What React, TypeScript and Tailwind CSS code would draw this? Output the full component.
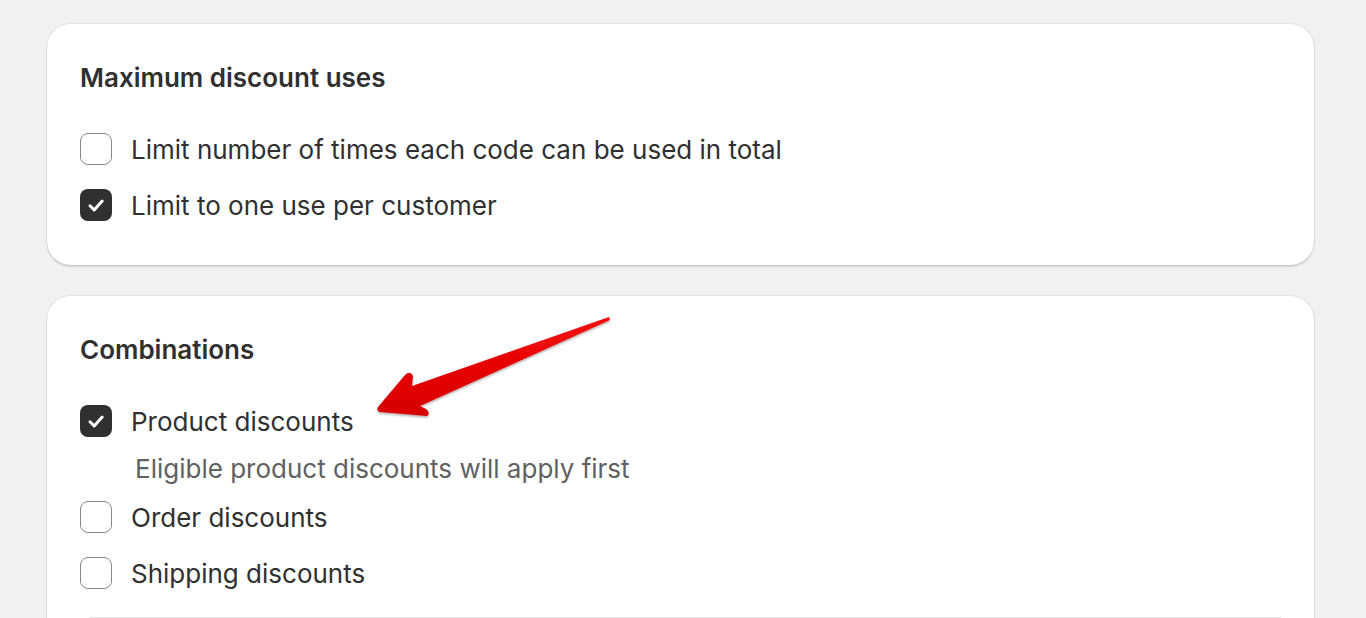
import React from 'react';

function CheckIcon() {
  return (
    <svg viewBox="0 0 32 32" className="h-[32px] w-[32px]" fill="none">
      <path d="M10 16.8l4.2 4.2L22.2 12" stroke="white" strokeWidth="3" strokeLinecap="round" strokeLinejoin="round" />
    </svg>
  );
}

function Checkbox({ checked }: { checked?: boolean }) {
  return checked ? (
    <div className="flex h-[32px] w-[32px] shrink-0 items-center justify-center rounded-[8px] bg-[#303030]">
      <CheckIcon />
    </div>
  ) : (
    <div className="h-[32px] w-[32px] shrink-0 rounded-[8px] border border-[#8a8a8a] bg-white" />
  );
}

function Option({ label, checked, help }: { label: string; checked?: boolean; help?: string }) {
  return (
    <div>
      <label className="flex h-[56px] items-center gap-[19px]">
        <Checkbox checked={checked} />
        <span className="text-[26px] text-[#303030]">{label}</span>
      </label>
      {help && <p className="pl-[55px] text-[26px] leading-[40px] text-[#616161]">{help}</p>}
    </div>
  );
}

function Card({ title, children }: { title: string; children: React.ReactNode }) {
  return (
    <div className="rounded-[24px] bg-white px-[33px] pb-[32px] pt-[38px] shadow-[0_2px_2px_rgba(0,0,0,0.12),0_0_0_1px_rgba(0,0,0,0.06)]">
      <h2 className="mb-[27px] text-[26px] font-semibold leading-[32px] text-[#303030]">{title}</h2>
      {children}
    </div>
  );
}

export default function App() {
  return (
    <div className="relative h-[618px] overflow-hidden bg-[#f1f1f1] px-[47px] pt-[24px] font-['Inter',sans-serif]">
      <div className="flex w-[1267px] flex-col gap-[31px]">
        <Card title="Maximum discount uses">
          <Option label="Limit number of times each code can be used in total" />
          <Option label="Limit to one use per customer" checked />
        </Card>
        <Card title="Combinations">
          <Option label="Product discounts" checked help="Eligible product discounts will apply first" />
          <Option label="Order discounts" />
          <Option label="Shipping discounts" />
          <div className="ml-[10px] mt-[16px] border-t border-[#e3e3e3]" />
          <div className="h-[60px]" />
        </Card>
      </div>

      {/* annotation arrow */}
      <svg className="pointer-events-none absolute left-0 top-0" width="1366" height="618">
        <defs>
          <linearGradient id="arrowFill" x1="0" y1="0" x2="0" y2="1">
            <stop offset="0" stopColor="#f30a0a" />
            <stop offset="1" stopColor="#d80000" />
          </linearGradient>
          <filter id="arrowShadow" x="-10%" y="-10%" width="120%" height="130%">
            <feDropShadow dx="0" dy="1.5" stdDeviation="1" floodColor="#000" floodOpacity="0.35" />
          </filter>
        </defs>
        <path
          d="M609 317 L610 320 L420 406 L426 409 Q431 413 427 416 L380 412 Q376 411 378 407 L405 375 Q410 370 413 376 L412 386 Z"
          fill="url(#arrowFill)"
          filter="url(#arrowShadow)"
        />
      </svg>
    </div>
  );
}
